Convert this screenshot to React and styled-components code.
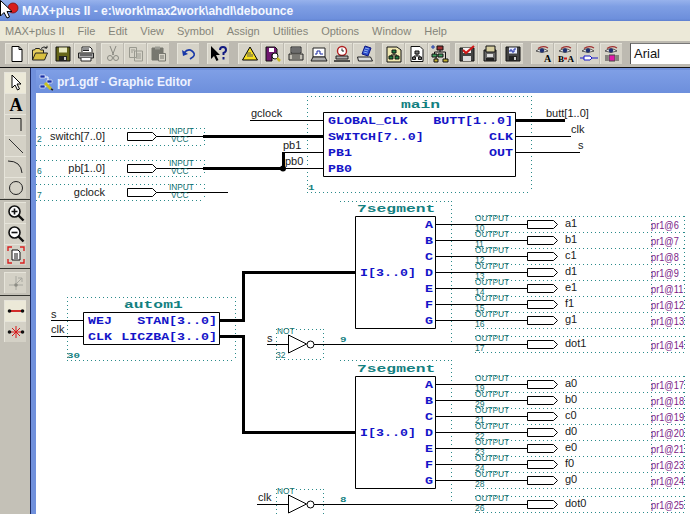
import React from 'react';
import styled, { createGlobalStyle } from 'styled-components';

const GlobalStyle = createGlobalStyle`
  html, body { margin: 0; padding: 0; background: #7090dc; }
  * { box-sizing: border-box; }
`;

const Window = styled.div`
  position: relative;
  display: flex;
  flex-direction: column;
  width: 690px;
  height: 514px;
  overflow: hidden;
  font-family: "Liberation Sans", Arial, sans-serif;
`;

const TitleBar = styled.div`
  display: flex;
  align-items: center;
  height: 21px;
  padding-left: 22px;
  background: linear-gradient(#97b2ec 0, #7f9fe4 30%, #6d8fdc 90%, #5f80cf 100%);
  color: #f4f7ff;
  font-size: 12px;
  font-weight: 700;
  white-space: nowrap;
`;

const MenuBar = styled.div`
  display: flex;
  align-items: center;
  gap: 13px;
  height: 20px;
  padding-left: 5px;
  background: #ece9d8;
  color: #85857a;
  font-size: 11px;
`;

const Toolbar = styled.div`
  display: flex;
  align-items: center;
  height: 27px;
  padding: 0 0 1px 5px;
  background: #bdbab1;
  border-bottom: 1px solid #111;
`;

const ButtonGroup = styled.div`
  display: flex;
  gap: 1px;
  margin-right: ${p => p.$gap}px;
`;

const ToolButton = styled.div`
  display: flex;
  align-items: center;
  justify-content: center;
  width: 22px;
  height: 21px;
  background: #d6d3c8;
  border-top: 1px solid #e6e4da;
  border-left: 1px solid #e6e4da;
`;

const FontBox = styled.div`
  flex: 1;
  height: 21px;
  margin-left: 8px;
  padding: 2px 0 0 3px;
  background: #fff;
  border-left: 1px solid #555;
  border-top: 1px solid #777;
  font-size: 13px;
  color: #111;
`;

const Workspace = styled.div`
  flex: 1;
  display: flex;
  min-height: 0;
`;

const ToolStrip = styled.div`
  display: flex;
  flex-direction: column;
  width: 31px;
  background: #c4c1b7;
  border-right: 1px solid #1d2b66;
`;

const StripGroup = styled.div`
  display: flex;
  flex-direction: column;
  align-items: center;
  gap: ${p => p.$gap ?? 0}px;
  height: ${p => p.$h}px;
  padding-top: ${p => p.$pad}px;
  border-bottom: ${p => (p.$last ? 0 : '1px solid #33332e')};
`;

const StripButton = styled.div`
  display: flex;
  align-items: center;
  justify-content: center;
  flex: none;
  width: 22px;
  height: 21px;
  background: ${p => (p.$active ? '#ece9d8' : '#d4d1c6')};
  border-top: 1px solid #e6e4da;
  border-left: 1px solid #e6e4da;
`;

const Mdi = styled.div`
  flex: 1;
  display: flex;
  flex-direction: column;
  min-width: 0;
  padding: 2px 0 0 5px;
  background: #7090dc;
`;

const ChildTitle = styled.div`
  display: flex;
  align-items: center;
  gap: 3px;
  height: 23px;
  padding: 0 0 0 2px;
  background: linear-gradient(#7f9fe6, #6d8fdc);
  color: #eef2ff;
  font-size: 12px;
  font-weight: 700;
  white-space: nowrap;
`;

const Canvas = styled.div`
  position: relative;
  flex: 1;
  background: #fff;
  overflow: hidden;
`;

const Wires = styled.svg`
  position: absolute;
  left: 0;
  top: 0;
`;

const OX = 36;
const OY = 93;
const CW = 654;

// everything on the sheet is a free placed item, coordinates are page pixels
const Placed = styled.span.attrs(p => ({
  style: p.$right
    ? { right: CW - (p.$right - OX), top: p.$y - OY }
    : { left: p.$x - OX, top: p.$y - OY },
}))`
  position: absolute;
  line-height: 1;
  white-space: nowrap;
`;

const WireLabel = styled(Placed)`
  transform: translateY(-50%);
  font-size: 11px;
  color: #1a1a1a;
`;

const PortName = styled(Placed)`
  transform: translateY(calc(-50% + 1px)) scaleX(1.33);
  transform-origin: ${p => (p.$right ? 'right' : 'left')} center;
  font-family: "Liberation Mono", monospace;
  font-size: 10px;
  font-weight: 700;
  color: #1414c8;
`;

const BlockTitle = styled(Placed)`
  transform: translateY(calc(-50% + 1px)) scaleX(1.63);
  transform-origin: left center;
  font-family: "Liberation Mono", monospace;
  font-size: 10px;
  font-weight: 700;
  color: #128080;
`;

const BlockNum = styled(Placed)`
  transform: translateY(-50%) scaleX(1.35);
  transform-origin: left center;
  font-family: "Liberation Mono", monospace;
  font-size: 8px;
  font-weight: 700;
  color: #128080;
`;

const PrimName = styled(Placed)`
  transform: translateY(-50%) scaleX(0.92);
  transform-origin: left center;
  font-size: 9px;
  line-height: 0.8;
  color: #107272;
`;

const PinNum = styled(Placed)`
  transform: translateY(-50%);
  font-size: 8.5px;
  line-height: 0.8;
  color: #107272;
`;

const Assign = styled(Placed)`
  transform: translateY(-50%) scaleX(0.88);
  transform-origin: left center;
  font-size: 10.5px;
  color: #7a1a86;
`;

const Cursor = styled.svg`
  position: absolute;
  left: 0;
  top: 0;
`;

const Icon = ({ children }) => (
  <svg width="18" height="18" viewBox="0 0 18 18">{children}</svg>
);

const eye = (
  <>
    <path d="M4 3.500 Q9 0 14 3" fill="none" stroke="#a03030" strokeWidth="1.200" />
    <path d="M2 6 Q8 1.500 14 6 Q8 9 2 6Z" fill="#f4f4f4" stroke="#333" strokeWidth=".8" />
    <circle cx="8" cy="5.400" r="2.200" fill="#203070" />
  </>
);

const toolbarGroups = [
  { gap: 5, icons: [
    <Icon key="new"><path d="M4 1.500h7l3 3v12H4z" fill="#fff" stroke="#000" /><path d="M11 1.500v3h3" fill="none" stroke="#000" /></Icon>,
    <Icon key="open"><path d="M1.500 15V5h2l1-1.500h4L9.500 5h3v3" fill="#e8d060" stroke="#222" /><path d="M1.500 15l3-7h12l-3 7z" fill="#d8c040" stroke="#222" /><path d="M10 3.500Q13 .5 16 3M16 3V.8M16 3h-2.400" fill="none" stroke="#222" /></Icon>,
    <Icon key="save"><path d="M2 2h14v14H2z" fill="#66661a" stroke="#111" /><path d="M5 2.500h8v5H5z" fill="#e9e9c0" /><path d="M5 11h8v5H5z" fill="#222" /><path d="M10 12h2v3h-2z" fill="#ccc" /></Icon>,
    <Icon key="print"><path d="M5 7V2h8l2 2v3" fill="#fff" stroke="#222" /><path d="M1.500 8h15v5h-15z" fill="#aaa" stroke="#222" /><path d="M4 13v3h10v-3" fill="#fff" stroke="#222" /><path d="M3 10h12M6 4h6M6 5.500h6" stroke="#222" /></Icon>,
  ] },
  { gap: 8, icons: [
    <Icon key="cut"><path d="M6 1l3.500 9M12 1L8.500 10" stroke="#8a8a82" fill="none" /><circle cx="6" cy="13" r="2.500" fill="none" stroke="#8a8a82" /><circle cx="12" cy="13" r="2.500" fill="none" stroke="#8a8a82" /></Icon>,
    <Icon key="copy"><path d="M2.500 2.500h7v10h-7zM7.500 6h8v10h-8z" fill="#d6d3c8" stroke="#9a9a90" /><path d="M4 5h4M4 7h2M9 9h5M9 11h5M9 13h5" stroke="#9a9a90" /></Icon>,
    <Icon key="paste"><path d="M2 3h11v12H2z" fill="#77776f" stroke="#77776f" /><path d="M5 1.500h5v3H5z" fill="#9c9c94" /><path d="M8.500 8.500h7v7.500h-7z" fill="#d6d3c8" stroke="#77776f" /><path d="M10 11h4M10 13h4" stroke="#77776f" /></Icon>,
  ] },
  { gap: 8, icons: [
    <Icon key="undo"><path d="M4 8Q8 3 12 6T13 12L10 14" fill="none" stroke="#1838a8" strokeWidth="1.600" /><path d="M2 5l1 6 5-2z" fill="#1838a8" /></Icon>,
  ] },
  { gap: 9, icons: [
    <Icon key="help"><path d="M1 1v13l3-3 2.500 5 2-1-2.500-5h4z" fill="#000" /><path d="M10 5Q10 2 13 2T16 5Q16 7 13.500 8V10" fill="none" stroke="#101880" strokeWidth="2" /><path d="M12.500 12h2v2.500h-2z" fill="#101880" /></Icon>,
  ] },
  { gap: 7, icons: [
    <Icon key="warn"><path d="M9 2l7.500 13h-15z" fill="#f8e020" stroke="#000" /><path d="M7 7v5M9 7v5M11 9v3" stroke="#555" /></Icon>,
    <Icon key="doc"><path d="M2 2h9l2 2v5H8v7H2z" fill="#701870" stroke="#111" /><path d="M5 3h5v4H5z" fill="#fff" /><circle cx="11" cy="11" r="3" fill="#fff" stroke="#111" /><path d="M13 13l3 3" stroke="#c8b820" strokeWidth="2.500" /></Icon>,
    <Icon key="comp1"><path d="M4 2h10v6H4z" fill="#aaa" stroke="#222" /><path d="M2 9h14v6H2z" fill="#c4c1b7" stroke="#222" /><path d="M5 4h8M5 6h8M5 11h8M5 13h8" stroke="#333" /></Icon>,
    <Icon key="comp2"><path d="M3 3h12v9H3z" fill="#fff" stroke="#222" /><path d="M5 9h2V6h3v3h3" fill="none" stroke="#1828a0" /><path d="M1 16l2-4h12l2 4z" fill="#aaa" stroke="#222" /></Icon>,
    <Icon key="comp3"><circle cx="9" cy="6" r="4.500" fill="#fff" stroke="#b02020" strokeWidth="1.400" /><path d="M9 3.500V6h2" fill="none" stroke="#222" /><path d="M3 11h12v3H3z" fill="#aaa" stroke="#222" /><path d="M1 16h16" stroke="#222" strokeWidth="1.500" /></Icon>,
    <Icon key="comp4"><path d="M9 1l6 2-3 8-6-2z" fill="#2848c8" stroke="#101880" /><path d="M9 3l4 1M8 5l4 1M7.500 7l4 1" stroke="#90b0f0" /><path d="M1.500 12h13l2 4h-14z" fill="#ddd" stroke="#222" /></Icon>,
  ] },
  { gap: 5, icons: [
    <Icon key="hier1"><path d="M2 2h10l4 3v12H2z" fill="#f0e8b0" stroke="#111" /><path d="M7 5h4v3H7zM4 11h4v3H4zM10 11h4v3h-4z" fill="#208040" stroke="#111" /><path d="M9 8v2M6 11v-1h6v1" stroke="#111" fill="none" /></Icon>,
    <Icon key="hier2"><path d="M3 1.500h9l3 3v12H3z" fill="#fff" stroke="#111" /><path d="M7 6h4v3H7zM4.500 12h3v2.500h-3zM10.500 12h3v2.500h-3z" fill="#777" stroke="#111" /><path d="M9 9v2M6 12v-1h6v1" stroke="#111" fill="none" /></Icon>,
    <Icon key="hier3"><path d="M6 1h6v4H6z" fill="#a03030" stroke="#111" /><path d="M1 9h5v3H1zM7 9h5v3H7z" fill="#40a060" stroke="#111" /><path d="M3 14h4v3H3zM12 14h5v3h-5z" fill="#c0b030" stroke="#111" /><path d="M9 5v2M3.500 9V7h11v7M5 14v-2" stroke="#111" fill="none" /><path d="M0 2h4M2 0v4" stroke="#1838a8" /></Icon>,
  ] },
  { gap: 8, icons: [
    <Icon key="chk"><path d="M2 3h14v13H2z" fill="#444" stroke="#111" /><path d="M5 3h8v5H5z" fill="#f4f4f4" /><path d="M5 11h8v5H5z" fill="#ddd" /><path d="M5 5l3 3 8-7" fill="none" stroke="#d01818" strokeWidth="2.200" /></Icon>,
    <Icon key="fax"><path d="M3 5h12v11H3z" fill="#666" stroke="#111" /><path d="M5 1h9v6H5z" fill="#d8d0a0" stroke="#111" /><path d="M6 9h6v3H6z" fill="#ddd" /><path d="M5 13h8v3H5z" fill="#222" /></Icon>,
    <Icon key="wave"><path d="M2 2h14v14H2z" fill="#444" stroke="#111" /><path d="M5 2.500h8v6H5z" fill="#e8ecff" /><path d="M6 7V5h2v2h2V4h2" fill="none" stroke="#1828a0" /><path d="M5 11h8v5H5z" fill="#222" /><path d="M10 12h2v3h-2z" fill="#ccc" /></Icon>,
  ] },
  { gap: 0, icons: [
    <Icon key="eyeA">{eye}<text x="10" y="17" fontFamily="Liberation Serif" fontSize="10" fontWeight="700">A</text></Icon>,
    <Icon key="eyeBA">{eye}<text x="1" y="17" fontFamily="Liberation Serif" fontSize="9" fontWeight="700">B</text><path d="M7 13.500h3" stroke="#d01818" strokeWidth="2" /><text x="10.500" y="17" fontFamily="Liberation Serif" fontSize="9" fontWeight="700">A</text></Icon>,
    <Icon key="eyePin">{eye}<path d="M0 13h4M12 13h6" stroke="#1818c8" /><path d="M4 11h6l2 2-2 2H4z" fill="#fff" stroke="#1818c8" /></Icon>,
    <Icon key="eyeChip">{eye}<path d="M6 10h6v6H6z" fill="#e018a8" stroke="#444" /><path d="M2 11h3M2 13h3M2 15h3M13 11h3M13 13h3M13 15h3" stroke="#333" /></Icon>,
  ] },
];

const stripIcon = {
  arrow: <Icon><path d="M5 1v13l3-3 2.500 5 2-1-2.500-5h4z" fill="#fff" stroke="#000" /></Icon>,
  text: <Icon><text x="9" y="15.500" textAnchor="middle" fontFamily="Liberation Serif" fontSize="18" fontWeight="700">A</text></Icon>,
  corner: <Icon><path d="M3 2.500h11V15" fill="none" stroke="#111" /></Icon>,
  line: <Icon><path d="M2 2l14 14" stroke="#333" /></Icon>,
  arc: <Icon><path d="M1 3Q14 3 15 15" fill="none" stroke="#222" /></Icon>,
  circle: <Icon><circle cx="9" cy="9" r="6.500" fill="none" stroke="#222" /></Icon>,
  zoomIn: <Icon><circle cx="7.500" cy="7.500" r="5.500" fill="#fff" stroke="#111" strokeWidth="1.600" /><path d="M11.500 11.500l5 5" stroke="#111" strokeWidth="2.400" /><path d="M4.500 7.500h6M7.500 4.500v6" stroke="#111" strokeWidth="1.600" /></Icon>,
  zoomOut: <Icon><circle cx="7.500" cy="7.500" r="5.500" fill="#fff" stroke="#111" strokeWidth="1.600" /><path d="M11.500 11.500l5 5" stroke="#111" strokeWidth="2.400" /><path d="M4.500 7.500h6" stroke="#111" strokeWidth="1.600" /></Icon>,
  fit: <Icon><path d="M5 4h6l2 2v8H5z" fill="#fff" stroke="#111" /><path d="M7 8h4M7 10h4M7 12h4" stroke="#111" /><path d="M1 5V1h4M17 5V1h-4M1 13v4h4M17 13v4h-4" fill="none" stroke="#d82020" strokeWidth="1.400" /></Icon>,
  snap: <Icon><path d="M9 2v14M2 11h14" stroke="#a8a8a0" /><circle cx="9" cy="11" r="1.800" fill="#8c8c84" /><path d="M10 9l5-5M11 4h4v4" fill="none" stroke="#a8a8a0" /></Icon>,
  rubber: <Icon><path d="M3 9h12" stroke="#d01818" strokeWidth="1.800" /><circle cx="2.500" cy="9" r="1.800" fill="#111" /><circle cx="15.500" cy="9" r="1.800" fill="#111" /></Icon>,
  star: <Icon><path d="M3 9h12M9 3v12M5 5l8 8M13 5l-8 8" stroke="#d81818" /><circle cx="2.500" cy="9" r="1.800" fill="#111" /><circle cx="15.500" cy="9" r="1.800" fill="#111" /></Icon>,
};

const segmentRows = [
  { port: 'A', base: 224 },
  { port: 'B', base: 240 },
  { port: 'C', base: 256 },
  { port: 'D', base: 272 },
  { port: 'E', base: 288 },
  { port: 'F', base: 304 },
  { port: 'G', base: 320 },
];

const outputs = [
  { off: 0, names: ['a1', 'b1', 'c1', 'd1', 'e1', 'f1', 'g1'], nums: [10, 11, 12, 13, 14, 15, 16], pins: [6, 7, 8, 9, 11, 12, 13] },
  { off: 160, names: ['a0', 'b0', 'c0', 'd0', 'e0', 'f0', 'g0'], nums: [19, 29, 21, 22, 23, 24, 28], pins: [17, 18, 19, 20, 21, 23, 24] },
];

const inputs = [
  { y: 136, name: 'switch[7..0]', num: '2', top: 128, bottom: 145, bold: true },
  { y: 168, name: 'pb[1..0]', num: '6', top: 160, bottom: 176, bold: true },
  { y: 192, name: 'gclock', num: '7', top: 184, bottom: 200 },
];

const DOTS = { stroke: '#2a8a8a', strokeWidth: 1, strokeDasharray: '1 3', fill: 'none' };

const Dotted = ({ d }) => <path d={d} {...DOTS} />;
const Thin = ({ d }) => <path d={d} fill="none" stroke="#000" strokeWidth="1" />;
const Thick = ({ d }) => <path d={d} fill="none" stroke="#000" strokeWidth="3" />;

const PinIn = ({ y }) => <path d={`M127.500 ${y - 4}h25l4 4-4 4h-25z`} fill="#fff" stroke="#000" />;
const PinOut = ({ y }) => <path d={`M527.500 ${y - 4}h26l4 4-4 4h-26z`} fill="#fff" stroke="#000" />;

const NotGate = ({ y }) => (
  <>
    <path d={`M288.500 ${y - 9}L306.500 ${y}L288.500 ${y + 9}Z`} fill="#fff" stroke="#000" />
    <circle cx="310.500" cy={y + 0.5} r="3.500" fill="#fff" stroke="#000" />
  </>
);

const Sheet = () => (
  <Wires width="654" height="421" viewBox="36 93 654 421">
    {/* dotted boundaries */}
    {inputs.map(i => <Dotted key={i.y} d={`M36 ${i.top + 0.5}H204M36 ${i.bottom + 0.5}H204M204.500 ${i.top}V${i.bottom}`} />)}
    <Dotted d="M307 96.500H531M307 192.500H531M307.500 96V192M531.500 96V192" />
    <Dotted d="M340 201.500H452M451.500 201V344M340 360.500H452M451.500 360V504" />
    <Dotted d="M67 297.500H235M67 360.500H235M67.500 297V360M235.500 297V360" />
    <Dotted d="M276 329.500H324M276 359.500H324M276.500 329V359M323.500 329V359" />
    <Dotted d="M276 489.500H324M276.500 489V514M323.500 489V514" />
    {[216, 232, 248, 264, 280, 296, 312, 328, 336, 352, 376, 392, 408, 424, 440, 456, 472, 488, 496, 512].map(y => (
      <Dotted key={y} d={`M475 ${y + 0.5}H684`} />
    ))}
    {[[216, 328], [336, 352], [376, 488], [496, 512]].map(([a, b]) => (
      <Dotted key={a} d={`M651.500 ${a}V${b}M684.500 ${a}V${b}`} />
    ))}

    {/* top row */}
    {inputs.map(i => <React.Fragment key={i.y}><Thin d={`M156 ${i.y + 0.5}H${i.bold ? 204 : 228}`} /><PinIn y={i.y + 0.5} /></React.Fragment>)}
    <Thick d="M203 136.500H324" />
    <Thick d="M203 168.500H283M283.500 152V169" />
    <circle cx="283" cy="168.500" r="3" fill="#000" />
    <Thin d="M250 120.500H323M283 152.500H323M283 168.500H323" />
    <path d="M323.500 112.500H515.500V176.500H323.500Z" fill="#fff" stroke="#000" />
    <Thick d="M516 120.500H565" />
    <Thin d="M516 136.500H571M516 152.500H580" />

    {/* autom1 */}
    <path d="M83.500 312.500H219.500V344.500H83.500Z" fill="#fff" stroke="#000" />
    <Thin d="M51 320.500H83M51 336.500H83" />
    <Thick d="M220 320.500H243.500V272.500H355" />
    <Thick d="M220 336.500H243.500V432.500H355" />

    {/* 7segment blocks */}
    {[0, 160].map(off => (
      <React.Fragment key={off}>
        <path d={`M355.500 ${216.5 + off}H435.500V${328.5 + off}H355.500Z`} fill="none" stroke="#000" />
        {segmentRows.map(r => (
          <React.Fragment key={r.port}>
            <Thin d={`M436 ${r.base + off + 0.5}H527`} />
            <PinOut y={r.base + off + 0.5} />
          </React.Fragment>
        ))}
      </React.Fragment>
    ))}

    {/* not gates and dot outputs */}
    <Thin d="M267 344.500H288M314 344.500H527" />
    <NotGate y={344} />
    <PinOut y={344.5} />
    <Thin d="M257 504.500H288M314 504.500H527" />
    <NotGate y={504} />
    <PinOut y={504.5} />
  </Wires>
);

const Labels = () => (
  <>
    {inputs.map(i => (
      <React.Fragment key={i.y}>
        <WireLabel $right={105} $y={i.y}>{i.name}</WireLabel>
        <PinNum $x={37} $y={i.y + 3}>{i.num}</PinNum>
        <PrimName $x={169} $y={i.y - 4}>INPUT</PrimName>
        <PrimName $x={171} $y={i.y + 4}>VCC</PrimName>
      </React.Fragment>
    ))}

    <WireLabel $x={251} $y={113}>gclock</WireLabel>
    <WireLabel $x={283} $y={145}>pb1</WireLabel>
    <WireLabel $x={285} $y={161}>pb0</WireLabel>
    <BlockTitle $x={401} $y={105}>main</BlockTitle>
    <PortName $x={328} $y={121}>GLOBAL_CLK</PortName>
    <PortName $x={328} $y={137}>SWITCH[7..0]</PortName>
    <PortName $x={328} $y={153}>PB1</PortName>
    <PortName $x={328} $y={169}>PB0</PortName>
    <PortName $right={513} $y={121}>BUTT[1..0]</PortName>
    <PortName $right={513} $y={137}>CLK</PortName>
    <PortName $right={513} $y={153}>OUT</PortName>
    <BlockNum $x={308} $y={188}>1</BlockNum>
    <WireLabel $x={546} $y={113}>butt[1..0]</WireLabel>
    <WireLabel $x={571} $y={129}>clk</WireLabel>
    <WireLabel $x={578} $y={145}>s</WireLabel>

    <BlockTitle $x={124} $y={305}>autom1</BlockTitle>
    <PortName $x={88} $y={321}>WEJ</PortName>
    <PortName $x={88} $y={337}>CLK</PortName>
    <PortName $right={217} $y={321}>STAN[3..0]</PortName>
    <PortName $right={217} $y={337}>LICZBA[3..0]</PortName>
    <BlockNum $x={67} $y={356}>30</BlockNum>
    <WireLabel $x={51} $y={314}>s</WireLabel>
    <WireLabel $x={51} $y={329}>clk</WireLabel>

    {outputs.map(o => (
      <React.Fragment key={o.off}>
        <BlockTitle $x={357} $y={209 + o.off}>7segment</BlockTitle>
        <PortName $x={360} $y={273 + o.off}>I[3..0]</PortName>
        {segmentRows.map((r, n) => (
          <React.Fragment key={r.port}>
            <PortName $right={433} $y={r.base + 1 + o.off}>{r.port}</PortName>
            <PrimName $x={475} $y={r.base - 5 + o.off}>OUTPUT</PrimName>
            <PinNum $x={475} $y={r.base + 4 + o.off}>{o.nums[n]}</PinNum>
            <WireLabel $x={565} $y={r.base - 1 + o.off}>{o.names[n]}</WireLabel>
            <Assign $x={651} $y={r.base + 1 + o.off}>pr1@{o.pins[n]}</Assign>
          </React.Fragment>
        ))}
      </React.Fragment>
    ))}

    <PrimName $x={277} $y={332}>NOT</PrimName>
    <PinNum $x={276} $y={355}>32</PinNum>
    <WireLabel $x={267} $y={338}>s</WireLabel>
    <BlockNum $x={340} $y={340}>9</BlockNum>
    <PrimName $x={475} $y={339}>OUTPUT</PrimName>
    <PinNum $x={475} $y={348}>17</PinNum>
    <WireLabel $x={565} $y={343}>dot1</WireLabel>
    <Assign $x={651} $y={345}>pr1@14</Assign>

    <PrimName $x={277} $y={492}>NOT</PrimName>
    <WireLabel $x={258} $y={497}>clk</WireLabel>
    <BlockNum $x={340} $y={500}>8</BlockNum>
    <PrimName $x={475} $y={499}>OUTPUT</PrimName>
    <PinNum $x={475} $y={508}>26</PinNum>
    <WireLabel $x={565} $y={503}>dot0</WireLabel>
    <Assign $x={651} $y={505}>pr1@25</Assign>
  </>
);

const menus = ['MAX+plus II', 'File', 'Edit', 'View', 'Symbol', 'Assign', 'Utilities', 'Options', 'Window', 'Help'];

const App = () => (
  <Window>
    <GlobalStyle />
    <TitleBar>MAX+plus II - e:\work\max2work\ahdl\debounce</TitleBar>
    <MenuBar>{menus.map(m => <span key={m}>{m}</span>)}</MenuBar>
    <Toolbar>
      {toolbarGroups.map((g, n) => (
        <ButtonGroup key={n} $gap={g.gap}>
          {g.icons.map(icon => <ToolButton key={icon.key}>{icon}</ToolButton>)}
        </ButtonGroup>
      ))}
      <FontBox>Arial</FontBox>
    </Toolbar>
    <Workspace>
      <ToolStrip>
        <StripGroup $h={132} $pad={4}>
          <StripButton $active>{stripIcon.arrow}</StripButton>
          <StripButton>{stripIcon.text}</StripButton>
          <StripButton>{stripIcon.corner}</StripButton>
          <StripButton>{stripIcon.line}</StripButton>
          <StripButton>{stripIcon.arc}</StripButton>
          <StripButton>{stripIcon.circle}</StripButton>
        </StripGroup>
        <StripGroup $h={69} $pad={2}>
          <StripButton>{stripIcon.zoomIn}</StripButton>
          <StripButton>{stripIcon.zoomOut}</StripButton>
          <StripButton>{stripIcon.fit}</StripButton>
        </StripGroup>
        <StripGroup $h={27} $pad={3}>
          <StripButton>{stripIcon.snap}</StripButton>
        </StripGroup>
        <StripGroup $last $pad={4} $gap={-1}>
          <StripButton $active>{stripIcon.rubber}</StripButton>
          <StripButton>{stripIcon.star}</StripButton>
        </StripGroup>
      </ToolStrip>
      <Mdi>
        <ChildTitle>
          <svg width="16" height="18" viewBox="0 0 16 18">
            <path d="M2 2h5v3H2zM9 7h5v3H9zM2 12h5v3H2z" fill="#1830a8" stroke="#fff" strokeWidth=".6" />
            <path d="M7 4h3v3M7 13h3v-3" fill="none" stroke="#fff" />
            <path d="M7 10l6 6" stroke="#c8c020" strokeWidth="3" />
            <path d="M13 16l2 1" stroke="#222" strokeWidth="1.500" />
          </svg>
          pr1.gdf - Graphic Editor
        </ChildTitle>
        <Canvas>
          <Sheet />
          <Labels />
        </Canvas>
      </Mdi>
    </Workspace>
    <Cursor width="22" height="22" viewBox="0 0 22 22">
      <circle cx="13" cy="8" r="5" fill="#d81c1c" stroke="#7a1010" strokeWidth=".8" />
      <path d="M.5 .5V16L4 12.500 7 18 9.500 17 7 11.500H12Z" fill="#fff" stroke="#000" />
    </Cursor>
  </Window>
);

export default App;
